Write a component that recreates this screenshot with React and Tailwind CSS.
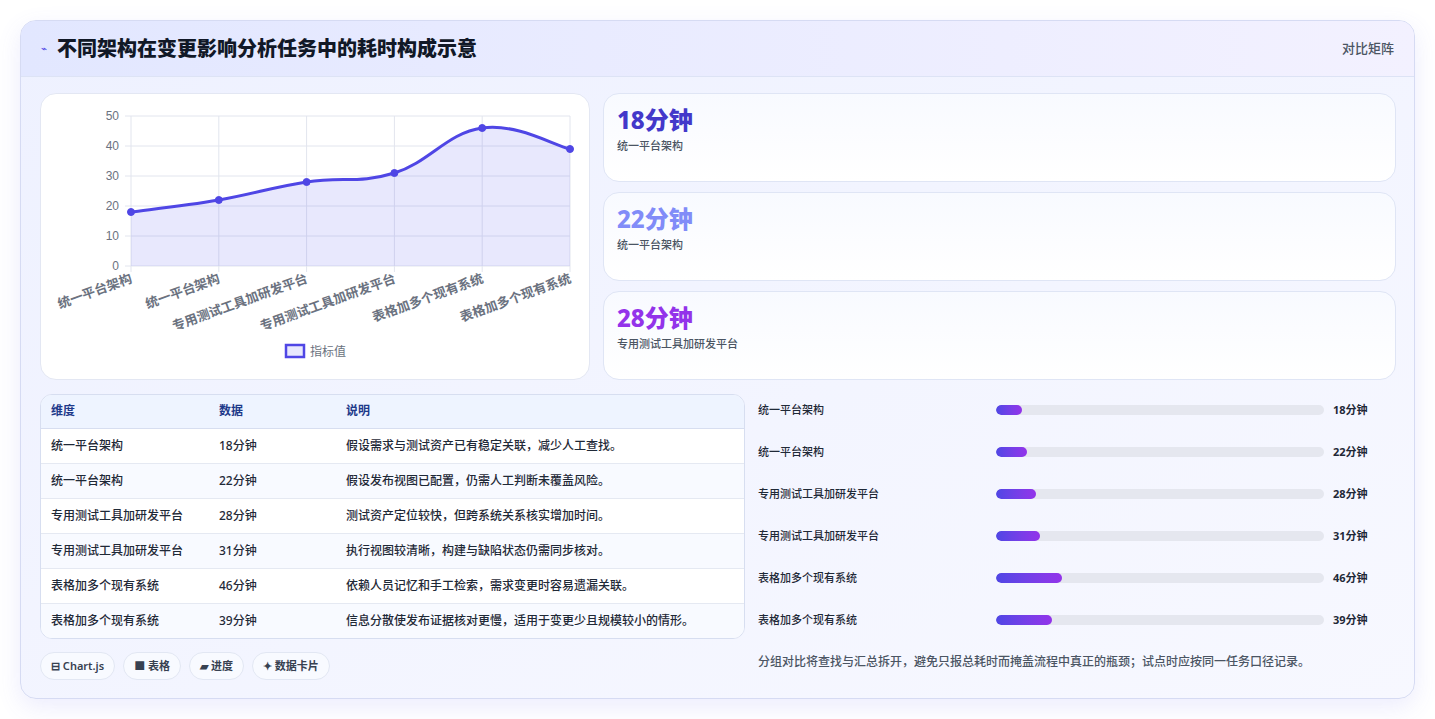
import React from "react";

const font = { fontFamily: '"Noto Sans", "Noto Sans CJK SC", sans-serif' };

const pts = [18, 22, 28, 31, 46, 39];
const labels = ["统一平台架构", "统一平台架构", "专用测试工具加研发平台", "专用测试工具加研发平台", "表格加多个现有系统", "表格加多个现有系统"];
const rows = [
  ["统一平台架构", "18分钟", "假设需求与测试资产已有稳定关联，减少人工查找。"],
  ["统一平台架构", "22分钟", "假设发布视图已配置，仍需人工判断未覆盖风险。"],
  ["专用测试工具加研发平台", "28分钟", "测试资产定位较快，但跨系统关系核实增加时间。"],
  ["专用测试工具加研发平台", "31分钟", "执行视图较清晰，构建与缺陷状态仍需同步核对。"],
  ["表格加多个现有系统", "46分钟", "依赖人员记忆和手工检索，需求变更时容易遗漏关联。"],
  ["表格加多个现有系统", "39分钟", "信息分散使发布证据核对更慢，适用于变更少且规模较小的情形。"],
];

function Chart() {
  const x0 = 90, x1 = 529, yTop = 22, yBot = 172;
  const xs = pts.map((_, i) => x0 + ((x1 - x0) * i) / 5);
  const ys = pts.map((v) => yBot - v * 3);
  let d = `M${xs[0]},${ys[0]}`;
  for (let i = 1; i < 6; i++) {
    const t = 0.4;
    const p0 = [xs[Math.max(i - 2, 0)], ys[Math.max(i - 2, 0)]];
    const p1 = [xs[i - 1], ys[i - 1]];
    const p2 = [xs[i], ys[i]];
    const p3 = [xs[Math.min(i + 1, 5)], ys[Math.min(i + 1, 5)]];
    const c1 = [p1[0] + (p2[0] - p0[0]) * t / 2, p1[1] + (p2[1] - p0[1]) * t / 2];
    const c2 = [p2[0] - (p3[0] - p1[0]) * t / 2, p2[1] - (p3[1] - p1[1]) * t / 2];
    d += ` C${c1[0]},${c1[1]} ${c2[0]},${c2[1]} ${p2[0]},${p2[1]}`;
  }
  return (
    <svg width="550" height="286" viewBox="0 0 550 286" style={{ fontFamily: '"Liberation Sans","Noto Sans CJK SC",sans-serif' }}>
      {[0, 10, 20, 30, 40, 50].map((v) => (
        <g key={v}>
          <line x1={x0 - 6} x2={x1} y1={yBot - v * 3} y2={yBot - v * 3} stroke="#e2e5ee" />
          <text x={x0 - 12} y={yBot - v * 3 + 4} fontSize="12" textAnchor="end" fill="#6b7280">{v}</text>
        </g>
      ))}
      {xs.map((x, i) => (
        <line key={i} x1={x} x2={x} y1={yTop} y2={yBot + 6} stroke="#e2e5ee" />
      ))}
      <path d={`${d} L${x1},${yBot} L${x0},${yBot} Z`} fill="rgba(99,102,241,0.15)" />
      <path d={d} fill="none" stroke="#4f46e5" strokeWidth="3" />
      {xs.map((x, i) => (
        <circle key={i} cx={x} cy={ys[i]} r="3.5" fill="#4f46e5" stroke="#4f46e5" strokeWidth="1" />
      ))}
      {xs.map((x, i) => (
        <text key={i} x={x + 2} y={yBot + 16} fontSize="13" fontWeight="bold" textAnchor="end" fill="#6b7280" transform={`rotate(-20 ${x + 2} ${yBot + 16})`}>{labels[i]}</text>
      ))}
      <rect x="245" y="251" width="18" height="12" fill="rgba(99,102,241,0.15)" stroke="#4f46e5" strokeWidth="2.5" />
      <text x="269" y="262" fontSize="12" fill="#6b7280">指标值</text>
    </svg>
  );
}

export default function App() {
  return (
    <div className="min-h-screen bg-white p-5" style={font}>
      <div className="rounded-2xl border border-[#d6dbf3] bg-gradient-to-br from-[#eef1ff] to-[#f7f8ff] shadow-[0_8px_24px_rgba(99,102,241,0.12)] overflow-hidden">
        <div className="h-[56px] flex items-center justify-between px-5 bg-gradient-to-r from-[#e2e7ff] to-[#f3f1ff] border-b border-[#dde3f5]">
          <div className="flex items-center gap-2.5">
            <span className="text-[#4f46e5] text-[10px]">⌁</span>
            <h1 className="text-[20px] font-extrabold text-[#111827]">不同架构在变更影响分析任务中的耗时构成示意</h1>
          </div>
          <span className="text-[13px] font-medium text-[#4b5563]">对比矩阵</span>
        </div>
        <div className="pl-[19px] pr-[18px] pb-[18px] pt-4 flex flex-col gap-[14px]">
          <div className="flex gap-[13px]">
            <div className="w-[550px] h-[287px] bg-white rounded-2xl border border-[#e3e7f3] overflow-hidden">
              <Chart />
            </div>
            <div className="flex-1 flex flex-col gap-[10px]">
              {[["18分钟", "text-[#4338ca]", "统一平台架构"], ["22分钟", "text-[#818cf8]", "统一平台架构"], ["28分钟", "text-[#9333ea]", "专用测试工具加研发平台"]].map(([v, c, l], i) => (
                <div key={i} className="h-[89px] rounded-2xl border border-[#dfe5f5] bg-gradient-to-b from-[#f8faff] to-white px-[13px] pt-[10px]">
                  <div className={`text-[24px] font-extrabold leading-[32px] ${c}`}>{v}</div>
                  <div className="text-[11px] font-medium text-[#4b5563] mt-0.5">{l}</div>
                </div>
              ))}
            </div>
          </div>
          <div className="flex gap-[13px]">
            <div className="w-[705px] flex flex-col">
              <div className="rounded-xl border border-[#d7def0] overflow-hidden bg-white">
                <table className="w-full text-[12px] font-medium">
                  <thead>
                    <tr className="bg-[#eef4ff] text-[#1e3a8a] h-[33px] border-b border-[#d7def0]">
                      <th className="text-left font-semibold pl-2.5 w-[178px]">维度</th>
                      <th className="text-left font-semibold w-[127px]">数据</th>
                      <th className="text-left font-semibold">说明</th>
                    </tr>
                  </thead>
                  <tbody>
                    {rows.map((r, i) => (
                      <tr key={i} className={`h-[35px] text-[#1f2937] ${i < 5 ? "border-b border-[#e5e9f2]" : ""} ${i % 2 ? "bg-[#f8faff]" : "bg-white"}`}>
                        <td className="pl-2.5">{r[0]}</td>
                        <td>{r[1]}</td>
                        <td>{r[2]}</td>
                      </tr>
                    ))}
                  </tbody>
                </table>
              </div>
              <div className="flex gap-2 mt-[13px]">
                {["⊟ Chart.js", "■ 表格", "▰ 进度", "✦ 数据卡片"].map((t) => (
                  <span key={t} className="h-[28px] px-2.5 flex items-center rounded-full border border-[#e2e7f3] bg-[#f8faff] text-[11px] font-semibold text-[#374151]">{t}</span>
                ))}
              </div>
            </div>
            <div className="flex-1 flex flex-col -mt-[5px]">
              {rows.map((r, i) => {
                const v = parseInt(r[1]);
                return (
                  <div key={i} className="h-[42px] flex items-center">
                    <span className="w-[238px] text-[11px] font-medium text-[#1f2937]">{r[0]}</span>
                    <div className="w-[328px] h-[10px] rounded-full bg-[#e5e7ef] overflow-hidden">
                      <div className="h-full rounded-full bg-gradient-to-r from-[#4f46e5] to-[#9333ea]" style={{ width: `${(v / 230) * 100}%` }} />
                    </div>
                    <span className="ml-[9px] text-[11px] font-bold text-[#1f2937]">{r[1]}</span>
                  </div>
                );
              })}
              <p className="mt-[12px] text-[12px] font-medium text-[#4b5563]">分组对比将查找与汇总拆开，避免只报总耗时而掩盖流程中真正的瓶颈；试点时应按同一任务口径记录。</p>
            </div>
          </div>
        </div>
      </div>
    </div>
  );
}
